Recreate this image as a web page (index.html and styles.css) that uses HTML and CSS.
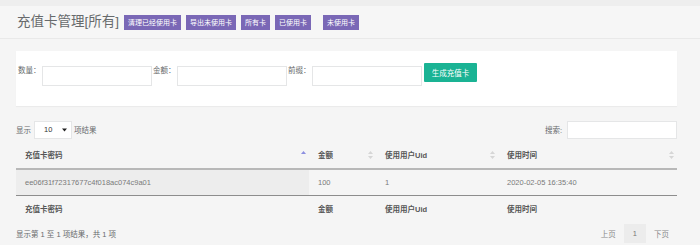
FILE: index.html
```html
<!DOCTYPE html>
<html lang="zh-CN">
<head>
<meta charset="utf-8">
<title>充值卡管理</title>
<link rel="stylesheet" href="styles.css">
</head>
<body>
<header class="header">
  <h1 class="title">充值卡管理[所有]</h1>
  <div class="actions">
    <a class="tag">清理已经使用卡</a>
    <a class="tag">导出未使用卡</a>
    <a class="tag">所有卡</a>
    <a class="tag">已使用卡</a>
    <a class="tag tag-far">未使用卡</a>
  </div>
</header>
<main class="content">
  <section class="panel">
    <form class="gen-form">
      <label class="lbl">数量：</label><span class="input"></span>
      <label class="lbl">金额：</label><span class="input"></span>
      <label class="lbl">前缀：</label><span class="input"></span>
      <button type="button" class="btn-gen">生成充值卡</button>
    </form>
  </section>

  <div class="tools">
    <div class="length">
      <span>显示</span>
      <span class="select"><span>10</span><svg width="5" height="4" viewBox="0 0 5 4"><polygon points="0,0.5 5,0.5 2.5,3.5" fill="#222"/></svg></span>
      <span>项结果</span>
    </div>
    <div class="search">
      <span>搜索:</span>
      <span class="search-input"></span>
    </div>
  </div>

  <table class="grid">
    <colgroup>
      <col class="w1"><col class="w2"><col class="w3"><col class="w4">
    </colgroup>
    <thead>
      <tr>
        <th><div class="th-in"><span>充值卡密码</span><svg width="5" height="8" viewBox="0 0 5 8"><polygon points="0,3 2.5,0 5,3" fill="#8c8fe0"/></svg></div></th>
        <th><div class="th-in"><span>金额</span><svg width="5" height="8" viewBox="0 0 5 8"><polygon points="0,3 2.5,0 5,3" fill="#d6d6d6"/><polygon points="0,5 5,5 2.5,8" fill="#d6d6d6"/></svg></div></th>
        <th><div class="th-in"><span>使用用户Uid</span><svg width="5" height="8" viewBox="0 0 5 8"><polygon points="0,3 2.5,0 5,3" fill="#d6d6d6"/><polygon points="0,5 5,5 2.5,8" fill="#d6d6d6"/></svg></div></th>
        <th><div class="th-in"><span>使用时间</span><svg width="5" height="8" viewBox="0 0 5 8"><polygon points="0,3 2.5,0 5,3" fill="#d6d6d6"/><polygon points="0,5 5,5 2.5,8" fill="#d6d6d6"/></svg></div></th>
      </tr>
    </thead>
    <tbody>
      <tr>
        <td class="sorted">ee06f31f72317677c4f018ac074c9a01</td>
        <td>100</td>
        <td>1</td>
        <td>2020-02-05 16:35:40</td>
      </tr>
    </tbody>
    <tfoot>
      <tr>
        <th>充值卡密码</th>
        <th>金额</th>
        <th>使用用户Uid</th>
        <th>使用时间</th>
      </tr>
    </tfoot>
  </table>

  <div class="bottom">
    <div class="info">显示第 1 至 1 项结果，共 1 项</div>
    <div class="pager">
      <span class="pg">上页</span>
      <span class="pg pg-cur">1</span>
      <span class="pg">下页</span>
    </div>
  </div>
</main>
</body>
</html>
```
FILE: styles.css
```css
* { box-sizing: border-box; }

body {
  margin: 0;
  background: #f5f5f5;
  font-family: "Liberation Sans", "Noto Sans CJK SC", sans-serif;
  font-size: 7.5px;
  color: #676a6c;
}

.header {
  height: 39px;
  border-top: 6px solid #eeeeee;
  border-bottom: 1px solid #e9e9e9;
  background: #f6f6f6;
  display: flex;
  align-items: center;
  padding-left: 17px;
}

.title {
  margin: 0;
  font-size: 13.5px;
  font-weight: normal;
  color: #676a6c;
  line-height: 16px;
}

.actions {
  display: flex;
  margin-left: 5px;
  gap: 5px;
}

.tag {
  display: inline-flex;
  align-items: center;
  height: 15px;
  padding: 0 4px;
  background: #7a68b6;
  color: #fff;
  font-size: 7px;
  line-height: 15px;
}

.tag-far { margin-left: 7px; }

.content {
  padding: 12px 23px 0 16px;
}

.panel {
  height: 55px;
  background: #fff;
  padding: 12px 0 0 2px;
  box-shadow: 0 1px 1px rgba(0, 0, 0, 0.04);
}

.gen-form {
  display: flex;
  align-items: flex-start;
  margin: 0;
}

.lbl {
  margin-top: 3px;
  line-height: 10px;
  width: 24px;
  color: #676a6c;
  white-space: nowrap;
}

.gen-form .lbl + .input { }

.input {
  display: block;
  margin-top: 3px;
  width: 110px;
  height: 20px;
  border: 1px solid #e5e6e7;
  background: #fff;
  margin-right: 1px;
}

.btn-gen {
  margin-left: 1px;
  width: 53px;
  height: 19px;
  padding: 0;
  border: 0;
  border-radius: 1px;
  background: #1ab394;
  color: #fff;
  font-family: inherit;
  font-size: 7.5px;
}

.tools {
  margin-top: 14px;
  height: 19px;
  display: flex;
  justify-content: space-between;
  align-items: center;
}

.length, .search {
  display: flex;
  align-items: center;
}

.select {
  display: flex;
  align-items: center;
  justify-content: space-between;
  margin: 0 2px 0 3px;
  width: 38px;
  height: 18px;
  padding: 0 4px 0 9px;
  background: #fff;
  border: 1px solid #e5e6e7;
  color: #333;
}

.search-input {
  display: block;
  margin-left: 5px;
  width: 110px;
  height: 18px;
  background: #fff;
  border: 1px solid #e5e6e7;
}

.grid {
  margin-top: 2px;
  width: 661px;
  border-collapse: collapse;
  table-layout: fixed;
}

.w1 { width: 293px; }
.w2 { width: 67px; }
.w3 { width: 122px; }
.w4 { width: 179px; }

.grid th {
  text-align: left;
  font-weight: bold;
  color: #555;
  padding: 0 3px 0 9px;
}

.grid thead th {
  height: 28px;
  border-bottom: 2px solid #b8b8b8;
}

.th-in {
  display: flex;
  justify-content: space-between;
  align-items: center;
}

.grid td {
  height: 26px;
  padding: 0 0 0 9px;
  color: #7a7a7a;
  border-bottom: 1px solid #8d8d8d;
}

.grid td.sorted { background: #ededed; }

.grid tfoot th {
  height: 27px;
}

.bottom {
  margin-top: 2px;
  display: flex;
  justify-content: space-between;
  align-items: center;
  height: 19px;
}

.info { color: #676a6c; }

.pager {
  display: flex;
  align-items: stretch;
  height: 19px;
}

.pg {
  display: flex;
  align-items: center;
  padding: 0 8px;
  color: #888;
}

.pg-cur {
  background: #ececec;
  padding: 0 9px;
  color: #777;
}
```
